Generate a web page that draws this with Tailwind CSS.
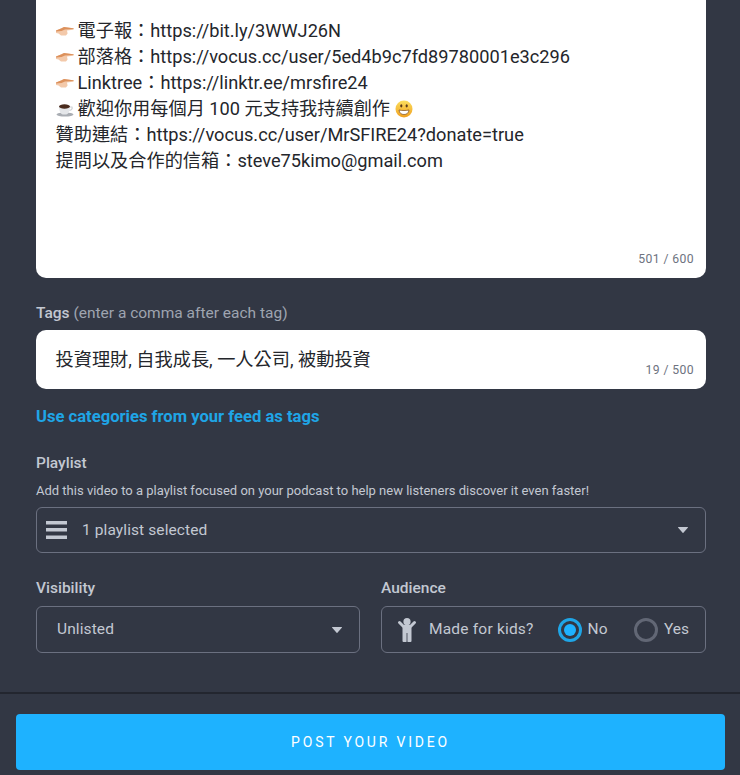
<!DOCTYPE html>
<html lang="en">
<head>
  <meta charset="UTF-8">
  <title>Post your video</title>
  <script src="https://cdn.jsdelivr.net/npm/@tailwindcss/browser@4"></script>
</head>
<body class="h-screen w-screen overflow-hidden flex flex-col bg-[#323744] text-[#c3c8d2] font-['Roboto','Noto_Sans_CJK_TC',sans-serif]">
  <!-- Form -->
  <main class="h-[692px] shrink-0 pl-[36px] pr-[34px] overflow-hidden">
    <!-- Description -->
    <div class="relative h-[278px] bg-white rounded-b-[10px] pl-[19.500px] pt-[18px] text-[18.200px] leading-[26px] text-[#24262b]">
      <div class="flex items-center"><svg class="w-[18px] h-[10px] mr-[4px] shrink-0" viewBox="0 0 18 10"><path d="M0 4.500 5 2.500 8 1l9 1.200c1 .2 1 1.400 0 1.600l-6 .6.600 3-1.600 2H5L2.500 7.500 0 7z" fill="#f3c9aa"/><path d="M0 4.500 5 2.500 8 1l9 1.200c.6.100.8.500.7.800L9 3.600 5.500 5 0 5.500z" fill="#dc915c"/></svg>電子報：https://bit.ly/3WWJ26N</div>
      <div class="flex items-center"><svg class="w-[18px] h-[10px] mr-[4px] shrink-0" viewBox="0 0 18 10"><path d="M0 4.500 5 2.500 8 1l9 1.200c1 .2 1 1.400 0 1.600l-6 .6.600 3-1.600 2H5L2.500 7.500 0 7z" fill="#f3c9aa"/><path d="M0 4.500 5 2.500 8 1l9 1.200c.6.100.8.500.7.800L9 3.600 5.500 5 0 5.500z" fill="#dc915c"/></svg>部落格：https://vocus.cc/user/5ed4b9c7fd89780001e3c296</div>
      <div class="flex items-center"><svg class="w-[18px] h-[10px] mr-[4px] shrink-0" viewBox="0 0 18 10"><path d="M0 4.500 5 2.500 8 1l9 1.200c1 .2 1 1.400 0 1.600l-6 .6.600 3-1.600 2H5L2.500 7.500 0 7z" fill="#f3c9aa"/><path d="M0 4.500 5 2.500 8 1l9 1.200c.6.100.8.500.7.800L9 3.600 5.500 5 0 5.500z" fill="#dc915c"/></svg>Linktree：https://linktr.ee/mrsfire24</div>
      <div class="flex items-center"><svg class="w-[18px] h-[15px] mr-[4px] shrink-0" viewBox="0 0 18 15"><ellipse cx="9" cy="12.500" rx="8.500" ry="2" fill="#a9adb3"/><path d="M3 4h11c0 4-1 8-4 8.500H7C4 12 3 8 3 4z" fill="#e4e6e9"/><ellipse cx="8.500" cy="4.500" rx="5.500" ry="2.200" fill="#4a2c1e"/><path d="M14 5h2c.8 1.500-.5 3-2.500 3.500" fill="none" stroke="#cfd2d6" stroke-width="1.200"/></svg>歡迎你用每個月 100 元支持我持續創作<svg class="w-[18px] h-[18px] ml-[5px] shrink-0" viewBox="0 0 18 18"><defs><linearGradient id="face" x1="0" y1="0" x2="0" y2="1"><stop offset="0" stop-color="#fcdf5e"/><stop offset="1" stop-color="#f0a020"/></linearGradient></defs><circle cx="9" cy="9" r="8.500" fill="url(#face)"/><path d="M4 10c3 .7 7 .7 10 0-.3 3-2.300 4.500-5 4.500S4.300 13 4 10z" fill="#fff" stroke="#7a4a1e" stroke-width=".7"/><ellipse cx="6.300" cy="5.800" rx="1.100" ry="1.600" fill="#5b3a1a"/><ellipse cx="11.700" cy="5.800" rx="1.100" ry="1.600" fill="#5b3a1a"/></svg></div>
      <div>贊助連結：https://vocus.cc/user/MrSFIRE24?donate=true</div>
      <div>提問以及合作的信箱：steve75kimo@gmail.com</div>
      <span class="absolute right-[12px] bottom-[12px] text-[12.200px] leading-[14px] tracking-[0.4px] text-[#6e7380]">501 / 600</span>
    </div>

    <!-- Tags -->
    <p class="mt-[26px] text-[15.500px] leading-[18px] text-[#9ea4b0]"><span class="font-medium text-[#c3c8d2]">Tags</span> (enter a comma after each tag)</p>
    <div class="relative mt-[8px] h-[59px] bg-white rounded-[10px] pl-[19.500px] pt-[17px] text-[18.200px] leading-[26px] text-[#24262b]">
      投資理財, 自我成長, 一人公司, 被動投資
      <span class="absolute right-[12px] bottom-[12px] text-[12.200px] leading-[14px] tracking-[0.4px] text-[#6e7380]">19 / 500</span>
    </div>
    <a class="block mt-[18px] text-[16.600px] leading-[20px] font-bold text-[#1fa5e6]">Use categories from your feed as tags</a>

    <!-- Playlist -->
    <p class="mt-[27px] text-[15.500px] leading-[18px] font-medium">Playlist</p>
    <p class="mt-[11px] text-[13px] leading-[16px] text-[#c3c8d2]">Add this video to a playlist focused on your podcast to help new listeners discover it even faster!</p>
    <div class="mt-[8px] h-[46px] border border-[#6b7080] rounded-[6px] flex items-center pl-[9px] pr-[17px]">
      <svg class="w-[21px] h-[18px] mr-[15px]" viewBox="0 0 21 18" fill="#c3c8d2"><rect width="21" height="3.500" y="0"/><rect width="21" height="3.500" y="7"/><rect width="21" height="3.500" y="14.500"/></svg>
      <span class="mt-[2px] text-[15.500px] tracking-[0.1px]">1 playlist selected</span>
      <svg class="ml-auto w-[10px] h-[6px]" viewBox="0 0 10 6" fill="#c3c8d2"><path d="M.5 0h9c.4 0 .6.400.3.700L5.400 5.700a.5.500 0 0 1-.8 0L.2.700C-.1.400.1 0 .5 0z"/></svg>
    </div>

    <!-- Visibility + Audience -->
    <div class="mt-[26px] flex gap-[21px]">
      <div class="w-[324px]">
        <p class="text-[15.500px] leading-[18px] font-medium">Visibility</p>
        <div class="mt-[9px] h-[47px] border border-[#6b7080] rounded-[6px] flex items-center pl-[20px] pr-[17px]">
          <span class="text-[15.500px] tracking-[0.1px]">Unlisted</span>
          <svg class="ml-auto w-[10px] h-[6px]" viewBox="0 0 10 6" fill="#c3c8d2"><path d="M.5 0h9c.4 0 .6.400.3.700L5.400 5.700a.5.500 0 0 1-.8 0L.2.700C-.1.400.1 0 .5 0z"/></svg>
        </div>
      </div>
      <div class="flex-1">
        <p class="text-[15.500px] leading-[18px] font-medium">Audience</p>
        <div class="mt-[9px] h-[47px] border border-[#6b7080] rounded-[6px] flex items-center pl-[15px]">
          <svg class="w-[20px] h-[24px] mr-[12px]" viewBox="0 0 20 24" fill="#c3c8d2"><circle cx="10" cy="3.700" r="3.600"/><path d="M2.500 4.500 6.500 8.500h7l4-4" fill="none" stroke="#c3c8d2" stroke-width="3" stroke-linecap="round" stroke-linejoin="round"/><path d="M5.500 8h9v15a1 1 0 0 1-1 1h-2.700a.4.400 0 0 1-.4-.4V15h-.8v8.600a.4.400 0 0 1-.4.400H6.500a1 1 0 0 1-1-1z"/></svg>
          <span class="text-[15.500px] tracking-[0.2px]">Made for kids?</span>
          <span class="ml-[24px] w-[24px] h-[24px] rounded-full border-[3px] border-[#1fa5e6] flex items-center justify-center"><span class="w-[12px] h-[12px] rounded-full bg-[#1eb2ff]"></span></span>
          <span class="ml-[6px] text-[15.500px] tracking-[0.2px]">No</span>
          <span class="ml-[26px] w-[24px] h-[24px] rounded-full border-[3px] border-[#626775]"></span>
          <span class="ml-[6px] text-[15.500px]">Yes</span>
        </div>
      </div>
    </div>
  </main>

  <!-- Footer -->
  <footer class="flex-1 border-t-2 border-[#23262f] pl-[16px] pr-[15px] pt-[20px]">
    <button class="w-full h-[56px] rounded-[4px] bg-[#1eb2ff] text-white text-[14px] tracking-[2.800px]">POST YOUR VIDEO</button>
  </footer>
</body>
</html>
